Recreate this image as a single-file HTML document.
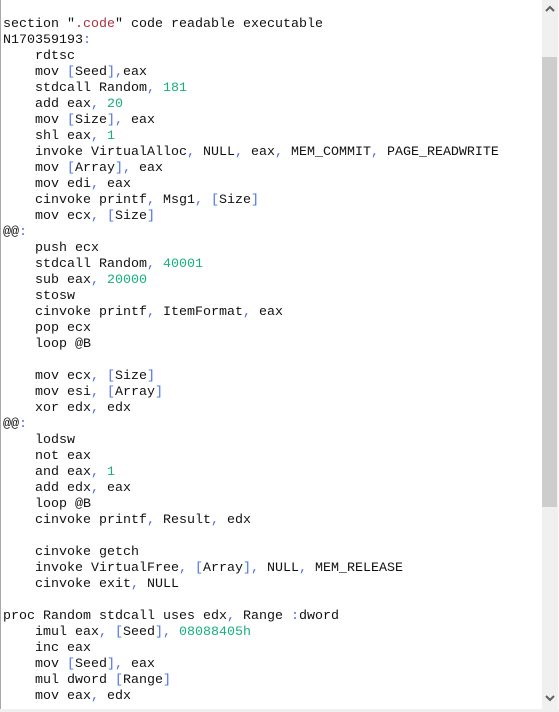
<!DOCTYPE html>
<html><head><style>
html,body{margin:0;padding:0;background:#fff;}
.wrap{position:relative;width:559px;height:712px;overflow:hidden;background:#fff;}
.lb{position:absolute;left:0;top:0;width:1px;height:710px;background:#a8a8a8;}
.bb{position:absolute;left:0;top:709px;width:559px;height:3px;background:#f0f0f0;}
pre{position:absolute;left:3px;top:17px;margin:0;font-family:"Liberation Mono",monospace;font-size:13.33px;line-height:16px;color:#111;}
.p{color:#4a6ee8}.n{color:#14b07a}.s{color:#b03040}
.sb{position:absolute;left:542px;top:0;width:16px;height:709px;background:#f0f0f0;}
.th{position:absolute;left:542px;top:57px;width:15px;height:450px;background:#cdcdcd;}
.ar{position:absolute;left:545px;width:10px;height:10px;}
</style></head><body><div class="wrap">
<div class="lb"></div>
<pre>section "<span class="s">.code</span>" code readable executable
N170359193<span class="p">:</span>
    rdtsc
    mov <span class="p">[</span>Seed<span class="p">],</span>eax
    stdcall Random<span class="p">,</span> <span class="n">181</span>
    add eax<span class="p">,</span> <span class="n">20</span>
    mov <span class="p">[</span>Size<span class="p">],</span> eax
    shl eax<span class="p">,</span> <span class="n">1</span>
    invoke VirtualAlloc<span class="p">,</span> NULL<span class="p">,</span> eax<span class="p">,</span> MEM_COMMIT<span class="p">,</span> PAGE_READWRITE
    mov <span class="p">[</span>Array<span class="p">],</span> eax
    mov edi<span class="p">,</span> eax
    cinvoke printf<span class="p">,</span> Msg1<span class="p">,</span> <span class="p">[</span>Size<span class="p">]</span>
    mov ecx<span class="p">,</span> <span class="p">[</span>Size<span class="p">]</span>
@@<span class="p">:</span>
    push ecx
    stdcall Random<span class="p">,</span> <span class="n">40001</span>
    sub eax<span class="p">,</span> <span class="n">20000</span>
    stosw
    cinvoke printf<span class="p">,</span> ItemFormat<span class="p">,</span> eax
    pop ecx
    loop @B

    mov ecx<span class="p">,</span> <span class="p">[</span>Size<span class="p">]</span>
    mov esi<span class="p">,</span> <span class="p">[</span>Array<span class="p">]</span>
    xor edx<span class="p">,</span> edx
@@<span class="p">:</span>
    lodsw
    not eax
    and eax<span class="p">,</span> <span class="n">1</span>
    add edx<span class="p">,</span> eax
    loop @B
    cinvoke printf<span class="p">,</span> Result<span class="p">,</span> edx

    cinvoke getch
    invoke VirtualFree<span class="p">,</span> <span class="p">[</span>Array<span class="p">],</span> NULL<span class="p">,</span> MEM_RELEASE
    cinvoke exit<span class="p">,</span> NULL

proc Random stdcall uses edx<span class="p">,</span> Range <span class="p">:</span>dword
    imul eax<span class="p">,</span> <span class="p">[</span>Seed<span class="p">],</span> <span class="n">08088405h</span>
    inc eax
    mov <span class="p">[</span>Seed<span class="p">],</span> eax
    mul dword <span class="p">[</span>Range<span class="p">]</span>
    mov eax<span class="p">,</span> edx
</pre>
<div class="sb"></div>
<div class="th"></div>
<svg class="ar" style="top:4px" viewBox="0 0 10 10"><path d="M1 7 L5 3 L9 7" stroke="#606060" stroke-width="2" fill="none"/></svg>
<svg class="ar" style="top:693px" viewBox="0 0 10 10"><path d="M1 3 L5 7 L9 3" stroke="#606060" stroke-width="2" fill="none"/></svg>
<div class="bb"></div>
</div></body></html>
